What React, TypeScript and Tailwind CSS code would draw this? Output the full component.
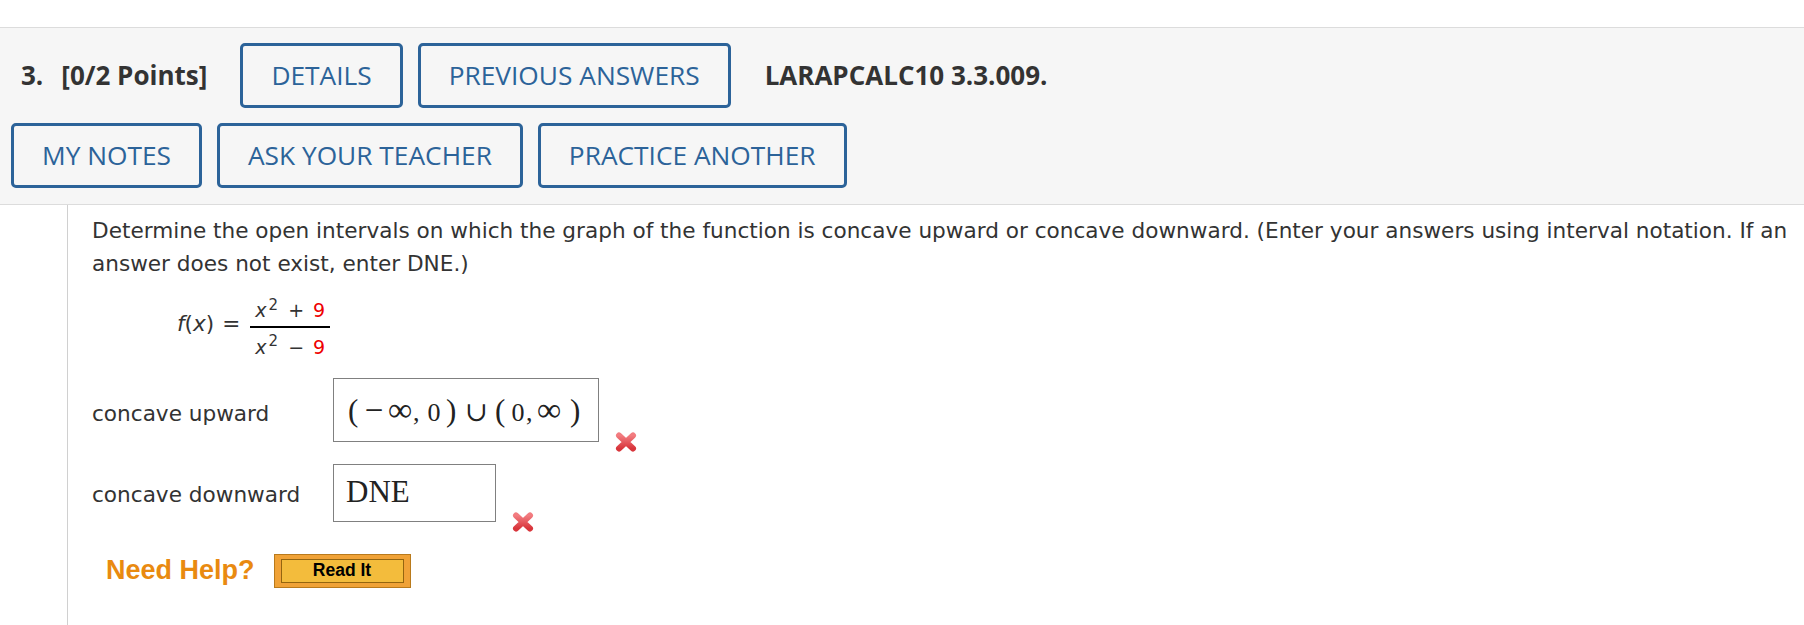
const blueBtn =
  "h-[65px] px-[28px] border-[3px] border-[#2c6399] rounded-[5px] text-[#2c6399] text-[26.3px] flex items-center whitespace-nowrap";

const RedX = () => (
  <svg width="22" height="20" viewBox="0 0 22 20" className="self-end mb-[-10px] ml-[16px]">
    <defs>
      <linearGradient id="xg" x1="0" y1="0" x2="0" y2="1">
        <stop offset="0" stopColor="#f27c80" />
        <stop offset="1" stopColor="#d8353b" />
      </linearGradient>
    </defs>
    <path d="M4 3.5 L18 16.5 M18 3.5 L4 16.5" stroke="url(#xg)" strokeWidth="6" strokeLinecap="round" fill="none" />
  </svg>
);

// one glyph of the typeset answer, in a fixed-width cell
const G = ({ c, w, ml, size }: { c: string; w: string; ml: string; size: string }) => (
  <span className={`inline-block text-center leading-none ${w} ${ml} ${size}`}>{c}</span>
);

const App = () => {
  return (
    <div className="min-h-[625px] w-full bg-white text-[#333]">
      <div className="h-[27px]" />

      {/* question header */}
      <div
        className="border-y border-[#dcdcdc] bg-[#f6f6f6] px-[11px] pt-[15px] pb-[16px]"
        style={{ fontFamily: '"Open Sans", sans-serif' }}
      >
        <div className="flex items-center pl-[10px]">
          <span className="text-[26px] font-bold text-[#333]">3.</span>
          <span className="ml-[18px] text-[26px] font-bold text-[#333]">[0/2 Points]</span>
          <div className="ml-[33px] flex gap-[15px]">
            <div className={blueBtn}>DETAILS</div>
            <div className={blueBtn}>PREVIOUS ANSWERS</div>
          </div>
          <span className="ml-[34px] text-[26px] font-bold text-[#333]">LARAPCALC10 3.3.009.</span>
        </div>
        <div className="mt-[15px] flex gap-[15px]">
          <div className={blueBtn}>MY NOTES</div>
          <div className={blueBtn}>ASK YOUR TEACHER</div>
          <div className={blueBtn}>PRACTICE ANOTHER</div>
        </div>
      </div>

      {/* question body */}
      <div
        className="ml-[67px] min-h-[420px] border-l border-[#d0d0d0] pl-[24px] pr-[12px] pt-[9px]"
        style={{ fontFamily: '"DejaVu Sans", Verdana, sans-serif' }}
      >
        <p className="text-[21.6px] leading-[33px]">
          Determine the open intervals on which the graph of the function is concave upward or concave downward. (Enter
          your answers using interval notation. If an answer does not exist, enter DNE.)
        </p>

        <div className="mt-[20px] ml-[85px] flex items-start">
          <span className="mt-[7px] text-[21.6px] leading-[33px]">
            <i>f</i>(<i>x</i>)<span className="ml-[8px] mr-[10px]">=</span>
          </span>
          <div className="flex flex-col items-stretch text-[19px] leading-[20px]">
            <div className="px-[5px] text-center whitespace-nowrap">
              <i>x</i>
              <sup className="ml-[2px] text-[15px]">2</sup>
              <span className="ml-[10px] mr-[9px]">+</span>
              <span className="text-[#ee0000]">9</span>
            </div>
            <div className="mt-[6px] h-[1.5px] bg-black" />
            <div className="mt-[9px] px-[5px] text-center whitespace-nowrap">
              <i>x</i>
              <sup className="ml-[2px] text-[15px]">2</sup>
              <span className="ml-[10px] mr-[9px]">−</span>
              <span className="text-[#ee0000]">9</span>
            </div>
          </div>
        </div>

        <div className="mt-[21px] flex items-baseline">
          <span className="w-[241px] text-[21.6px]">concave upward</span>
          <div
            className="box-border flex h-[64px] w-[266px] items-baseline border border-[#808080] pl-[14px] pt-[14px] text-[#222] whitespace-nowrap"
            style={{ fontFamily: '"Liberation Serif", "DejaVu Serif", serif' }}
          >
            <G c="(" w="w-[10px]" ml="ml-0" size="text-[31px]" />
            <G c="−" w="w-[20px]" ml="ml-[6px]" size="text-[33px]" />
            <G c="∞" w="w-[28px]" ml="ml-[2px]" size="text-[34px]" />
            <G c="," w="w-[6px]" ml="ml-[-1px]" size="text-[26px]" />
            <G c="0" w="w-[14px]" ml="ml-[8px]" size="text-[26px]" />
            <G c=")" w="w-[10px]" ml="ml-[5px]" size="text-[31px]" />
            <G c="∪" w="w-[22px]" ml="ml-[9px]" size="text-[27px]" />
            <G c="(" w="w-[10px]" ml="ml-[8px]" size="text-[31px]" />
            <G c="0" w="w-[14px]" ml="ml-[6px]" size="text-[26px]" />
            <G c="," w="w-[6px]" ml="ml-[1px]" size="text-[26px]" />
            <G c="∞" w="w-[28px]" ml="ml-[3px]" size="text-[34px]" />
            <G c=")" w="w-[10px]" ml="ml-[7px]" size="text-[31px]" />
          </div>
          <RedX />
        </div>

        <div className="mt-[22px] flex items-baseline">
          <span className="w-[241px] text-[21.6px]">concave downward</span>
          <div
            className="box-border h-[58px] w-[163px] border border-[#808080] pl-[12px] pt-[10px] text-[31px] leading-[34px] text-[#222]"
            style={{ fontFamily: '"Liberation Serif", "DejaVu Serif", serif' }}
          >
            DNE
          </div>
          <RedX />
        </div>

        <div className="mt-[32px] ml-[14px] flex items-center" style={{ fontFamily: '"Liberation Sans", Arial, sans-serif' }}>
          <span className="text-[27px] font-bold leading-none text-[#e98a10]">Need Help?</span>
          <div className="ml-[19px] box-border h-[34px] w-[137px] border border-[#b97a1c] bg-[#f0a237] px-[6px] py-[4px]">
            <div className="flex h-full items-center justify-center border border-[#94650f] bg-[#f3bc3c] text-[17.5px] font-bold text-black">
              Read It
            </div>
          </div>
        </div>
      </div>
    </div>
  );
};

export default App;
